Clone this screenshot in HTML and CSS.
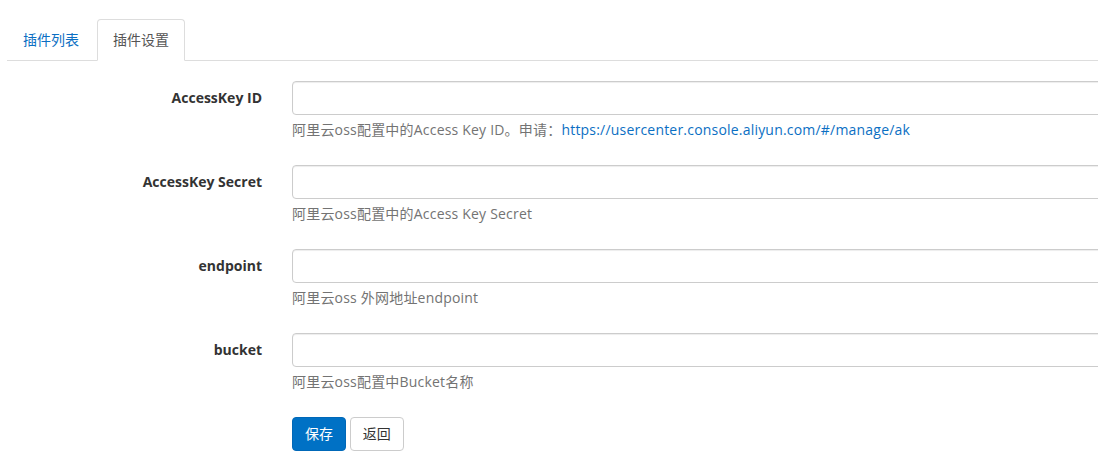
FILE: index.html
```html
<!DOCTYPE html>
<html lang="zh-CN">
<head>
    <meta charset="UTF-8">
    <meta name="viewport" content="width=device-width, initial-scale=1.0">
    <title>插件设置</title>
    <link rel="stylesheet" href="styles.css">
</head>
<body>

    <!-- Tabs -->
    <ul class="nav-tabs">
        <li><a href="#">插件列表</a></li>
        <li class="active"><a href="#">插件设置</a></li>
    </ul>

    <!-- Settings form -->
    <form class="settings-form">
        <div class="form-group">
            <label class="control-label">AccessKey ID</label>
            <div class="control">
                <input type="text" class="form-control">
                <p class="help-block">阿里云oss配置中的Access Key ID。申请：<a href="#">https://usercenter.console.aliyun.com/#/manage/ak</a></p>
            </div>
        </div>
        <div class="form-group">
            <label class="control-label">AccessKey Secret</label>
            <div class="control">
                <input type="text" class="form-control">
                <p class="help-block">阿里云oss配置中的Access Key Secret</p>
            </div>
        </div>
        <div class="form-group">
            <label class="control-label">endpoint</label>
            <div class="control">
                <input type="text" class="form-control">
                <p class="help-block">阿里云oss 外网地址endpoint</p>
            </div>
        </div>
        <div class="form-group">
            <label class="control-label">bucket</label>
            <div class="control">
                <input type="text" class="form-control">
                <p class="help-block">阿里云oss配置中Bucket名称</p>
            </div>
        </div>
        <div class="form-group">
            <span class="control-label"></span>
            <div class="control">
                <button type="button" class="btn btn-primary">保存</button>
                <button type="button" class="btn btn-default">返回</button>
            </div>
        </div>
    </form>

</body>
</html>
```

FILE: styles.css
```css
/* Basic page */
body {
    font-family: "Open Sans", "Noto Sans CJK SC", sans-serif;
    font-size: 14px;
    line-height: 20px;
    color: #333;
    margin: 0;
    padding: 19px 0 0 7px;
    background: #fff;
    overflow: hidden;
}

a {
    color: #0b6fc3;
    text-decoration: none;
}

/* Tabs */
.nav-tabs {
    list-style: none;
    margin: 0;
    padding: 0;
    display: flex;
    border-bottom: 1px solid #ddd;
}
.nav-tabs li {
    margin-right: 2px;
    margin-bottom: -1px;
}
.nav-tabs li a {
    display: block;
    padding: 10px 15px;
    border: 1px solid transparent;
    border-radius: 4px 4px 0 0;
}
.nav-tabs li.active a {
    color: #555;
    background: #fff;
    border-color: #ddd #ddd transparent;
}

/* Form */
.settings-form {
    margin-top: 20px;
}
.form-group {
    display: flex;
    margin-bottom: 15px;
}
.control-label {
    width: 255px;
    flex-shrink: 0;
    padding: 7px 15px 0 0;
    text-align: right;
    font-weight: bold;
}
.control {
    padding-left: 15px;
    width: 840px;
    flex-shrink: 0;
}
.form-control {
    display: block;
    box-sizing: border-box;
    width: 100%;
    height: 34px;
    margin: 0;
    padding: 6px 12px;
    border: 1px solid #ccc;
    border-radius: 4px;
    box-shadow: inset 0 1px 1px rgba(0, 0, 0, 0.075);
    font: inherit;
}
.help-block {
    margin: 5px 0 10px;
    color: #737373;
    letter-spacing: 0.2px;
}

/* Buttons */
.btn {
    height: 34px;
    padding: 6px 12px;
    font: inherit;
    border: 1px solid transparent;
    border-radius: 4px;
    cursor: pointer;
}
.btn-primary {
    background: #0071c5;
    border-color: #0068b8;
    color: #fff;
}
.btn-default {
    background: #fff;
    border-color: #ccc;
    color: #333;
}
```
